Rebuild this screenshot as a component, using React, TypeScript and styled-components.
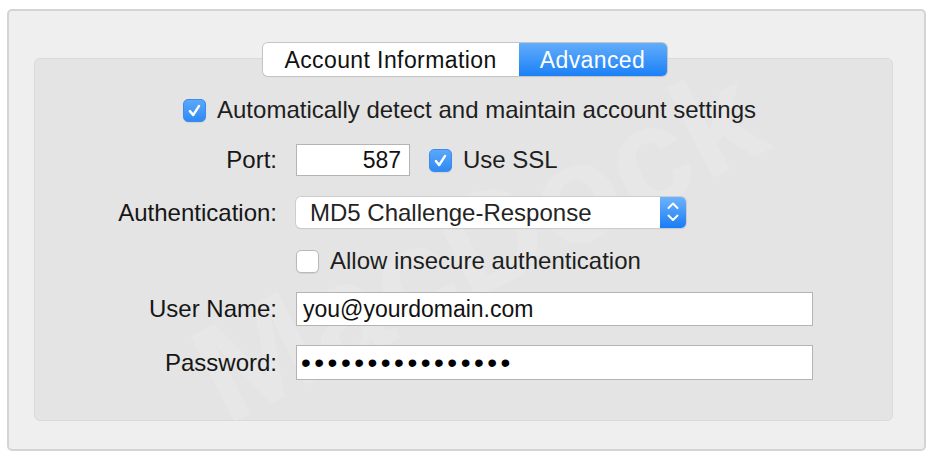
import React from "react";
import styled, { createGlobalStyle } from "styled-components";

const GlobalStyle = createGlobalStyle`
  body {
    margin: 0;
    background: #ffffff;
    font-family: "Liberation Sans", Arial, sans-serif;
  }
`;

const Window = styled.div`
  box-sizing: border-box;
  width: 919px;
  height: 442px;
  margin: 9px 0 0 7px;
  padding: 47px 31px 28px 25px;
  display: flex;
  background: #efefef;
  border: 2px solid #d4d4d4;
  border-radius: 5px;
`;

const Box = styled.div`
  position: relative;
  flex: 1;
  display: flex;
  flex-direction: column;
  background: #e4e4e4;
  border: 1px solid #dadada;
  border-radius: 6px;
`;

// faint diagonal watermark over the panel
const Watermark = styled.div`
  position: absolute;
  left: 50%;
  top: 50%;
  transform: translate(-50%, -50%) translate(14px, 4px) rotate(-27deg);
  font-size: 140px;
  font-weight: bold;
  color: rgba(255, 255, 255, 0.13);
  white-space: nowrap;
  pointer-events: none;
  user-select: none;
`;

const Tabs = styled.div`
  align-self: center;
  display: flex;
  height: 33px;
  margin: -16px 0 0 2px;
  border-radius: 5px;
  box-shadow: 0 0 0 1px #c4c4c4, 0 1px 1px rgba(0, 0, 0, 0.12);
  overflow: hidden;
  position: relative;
  z-index: 1;
`;

const Tab = styled.div<{ $active?: boolean; $w: number }>`
  width: ${(p) => p.$w}px;
  display: flex;
  align-items: center;
  justify-content: center;
  padding-top: 1px;
  font-size: 23px;
  letter-spacing: 0.4px;
  color: ${(p) => (p.$active ? "#ffffff" : "#111111")};
  background: ${(p) =>
    p.$active ? "linear-gradient(#62adfb, #1b80f6)" : "#ffffff"};
`;

const Form = styled.div`
  display: flex;
  flex-direction: column;
  margin-top: 22px;
  position: relative;
`;

const Row = styled.div<{ $mt?: number; $h: number }>`
  display: grid;
  grid-template-columns: 242px 1fr;
  column-gap: 19px;
  align-items: center;
  height: ${(p) => p.$h}px;
  margin-top: ${(p) => p.$mt || 0}px;
`;

const Label = styled.div`
  text-align: right;
  font-size: 24px;
  line-height: 1;
  color: #161616;
`;

const CheckRow = styled.label<{ $span?: boolean }>`
  display: flex;
  align-items: center;
  gap: 11px;
  font-size: 24px;
  line-height: 1;
  color: #1e1e1e;
  ${(p) => (p.$span ? "grid-column: 1 / -1; justify-self: center; padding-left: 12px;" : "")}
`;

const Box23 = styled.span<{ $checked?: boolean }>`
  box-sizing: border-box;
  width: 23px;
  height: 23px;
  flex: none;
  display: flex;
  align-items: center;
  justify-content: center;
  border-radius: 5px;
  background: ${(p) =>
    p.$checked ? "linear-gradient(#5aa8fb, #2f8af5)" : "#ffffff"};
  border: 1px solid ${(p) => (p.$checked ? "#3a8cf0" : "#b9b9b9")};
  box-shadow: 0 1px 1px rgba(0, 0, 0, 0.08);
`;

const Controls = styled.div`
  display: flex;
  align-items: center;
  gap: 19px;
`;

const Field = styled.input<{ $w: number; $h: number; $right?: boolean }>`
  box-sizing: border-box;
  width: ${(p) => p.$w}px;
  height: ${(p) => p.$h}px;
  margin: 0;
  padding: 0 8px 0 6px;
  border: 1px solid #b4b4b4;
  background: #ffffff;
  font-family: "Liberation Sans", Arial, sans-serif;
  font-size: 23px;
  color: #111111;
  text-align: ${(p) => (p.$right ? "right" : "left")};
  outline: none;
`;

const Secret = styled(Field)`
  font-size: 28px;
  letter-spacing: 3.5px;
  padding-left: 4px;
  color: #000000;
`;

const Select = styled.div`
  box-sizing: border-box;
  width: 390px;
  height: 31px;
  display: flex;
  align-items: stretch;
  border-radius: 5px;
  background: #ffffff;
  box-shadow: 0 0 0 1px #cdcdcd, 0 1px 1px rgba(0, 0, 0, 0.18);
  overflow: hidden;
`;

const SelectText = styled.span`
  flex: 1;
  display: flex;
  align-items: center;
  padding-left: 14px;
  font-size: 24px;
  color: #242424;
`;

const Stepper = styled.span`
  width: 26px;
  display: flex;
  align-items: center;
  justify-content: center;
  background: linear-gradient(#6db3fb, #1a7cf5);
`;

function Check({ checked }: { checked?: boolean }) {
  return (
    <Box23 $checked={checked}>
      {checked && (
        <svg width="23" height="23" viewBox="0 0 23 23">
          <path
            d="M6.5 12.2 L10 16.5 L16.5 6.5"
            fill="none"
            stroke="#ffffff"
            strokeWidth="2.7"
            strokeLinecap="round"
            strokeLinejoin="round"
          />
        </svg>
      )}
    </Box23>
  );
}

export default function App() {
  return (
    <>
      <GlobalStyle />
      <Window>
        <Box>
          <Watermark>MacDock</Watermark>
          <Tabs>
            <Tab $w={256}>Account Information</Tab>
            <Tab $w={148} $active>
              Advanced
            </Tab>
          </Tabs>
          <Form>
            <Row $h={23}>
              <CheckRow $span>
                <Check checked />
                Automatically detect and maintain account settings
              </CheckRow>
            </Row>

            <Row $h={32} $mt={23}>
              <Label>Port:</Label>
              <Controls>
                <Field $w={114} $h={32} $right readOnly value="587" />
                <CheckRow>
                  <Check checked />
                  Use SSL
                </CheckRow>
              </Controls>
            </Row>

            <Row $h={31} $mt={21}>
              <Label>Authentication:</Label>
              <Select>
                <SelectText>MD5 Challenge-Response</SelectText>
                <Stepper>
                  <svg width="26" height="31" viewBox="0 0 26 31">
                    <path
                      d="M8.5 11 L13 6.5 L17.5 11 M8.5 18.5 L13 23 L17.5 18.5"
                      fill="none"
                      stroke="#ffffff"
                      strokeWidth="2"
                      strokeLinecap="round"
                      strokeLinejoin="round"
                    />
                  </svg>
                </Stepper>
              </Select>
            </Row>

            <Row $h={23} $mt={21}>
              <span />
              <CheckRow>
                <Check />
                Allow insecure authentication
              </CheckRow>
            </Row>

            <Row $h={34} $mt={20}>
              <Label>User Name:</Label>
              <Field $w={517} $h={34} readOnly value="you@yourdomain.com" />
            </Row>

            <Row $h={35} $mt={19}>
              <Label>Password:</Label>
              <Secret
                $w={517}
                $h={35}
                type="password"
                readOnly
                value="passwordpassword"
              />
            </Row>
          </Form>
        </Box>
      </Window>
    </>
  );
}
